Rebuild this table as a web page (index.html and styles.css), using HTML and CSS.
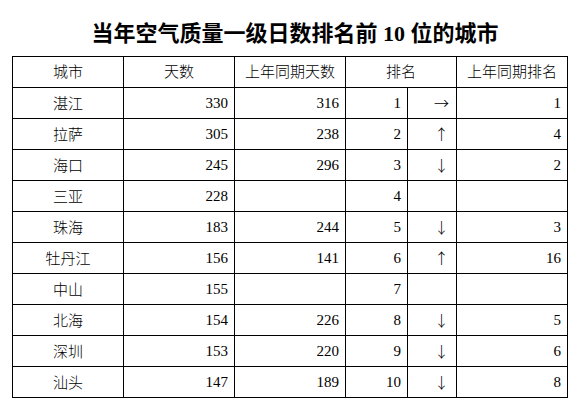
FILE: index.html
```html
<!DOCTYPE html>
<html lang="zh-CN">
<head>
<meta charset="utf-8">
<link rel="stylesheet" href="styles.css">
</head>
<body>
<div class="page">
  <h1 class="title">当年空气质量一级日数排名前 10 位的城市</h1>
  <table class="rank-table">
    <colgroup>
      <col class="c-city"><col class="c-days"><col class="c-prev"><col class="c-rank"><col class="c-arrow"><col class="c-prevrank">
    </colgroup>
    <thead>
      <tr><th>城市</th><th>天数</th><th>上年同期天数</th><th colspan="2">排名</th><th>上年同期排名</th></tr>
    </thead>
    <tbody>
      <tr><td class="city">湛江</td><td>330</td><td>316</td><td>1</td><td class="arrow">→</td><td>1</td></tr>
      <tr><td class="city">拉萨</td><td>305</td><td>238</td><td>2</td><td class="arrow">↑</td><td>4</td></tr>
      <tr><td class="city">海口</td><td>245</td><td>296</td><td>3</td><td class="arrow">↓</td><td>2</td></tr>
      <tr><td class="city">三亚</td><td>228</td><td></td><td>4</td><td class="arrow"></td><td></td></tr>
      <tr><td class="city">珠海</td><td>183</td><td>244</td><td>5</td><td class="arrow">↓</td><td>3</td></tr>
      <tr><td class="city">牡丹江</td><td>156</td><td>141</td><td>6</td><td class="arrow">↑</td><td>16</td></tr>
      <tr><td class="city">中山</td><td>155</td><td></td><td>7</td><td class="arrow"></td><td></td></tr>
      <tr><td class="city">北海</td><td>154</td><td>226</td><td>8</td><td class="arrow">↓</td><td>5</td></tr>
      <tr><td class="city">深圳</td><td>153</td><td>220</td><td>9</td><td class="arrow">↓</td><td>6</td></tr>
      <tr><td class="city">汕头</td><td>147</td><td>189</td><td>10</td><td class="arrow">↓</td><td>8</td></tr>
    </tbody>
  </table>
</div>
</body>
</html>
```
FILE: styles.css
```css
html, body {
  margin: 0;
  padding: 0;
  background: #ffffff;
}
.page {
  width: 583px;
  height: 414px;
  color: #000;
  font-family: "Liberation Serif", "Noto Sans CJK SC", serif;
}
.title {
  margin: 0;
  padding: 22px 0 0 7px;
  height: 34px;
  text-align: center;
  font-size: 22px;
  line-height: 24px;
  font-weight: bold;
  font-family: "Liberation Serif", "Noto Sans CJK SC", serif;
}
.rank-table {
  margin-left: 12px;
  border-collapse: collapse;
  table-layout: fixed;
  width: 556px;
  font-size: 15px;
}
.c-city, .c-days, .c-prev, .c-prevrank { width: 111px; }
.c-rank { width: 62px; }
.c-arrow { width: 49px; }
.rank-table th, .rank-table td {
  border: 1px solid #000;
  height: 31px;
  padding: 0 6px 0 0;
  box-sizing: border-box;
  line-height: 18px;
  font-weight: 300;
  text-align: right;
  vertical-align: middle;
  white-space: nowrap;
}
.rank-table th {
  text-align: center;
  padding: 0;
}
.rank-table td.city {
  text-align: center;
  padding: 2px 0 0 0;
}
.rank-table td.arrow {
  font-family: "Noto Sans CJK SC", sans-serif;
  padding-right: 7px;
}
```
